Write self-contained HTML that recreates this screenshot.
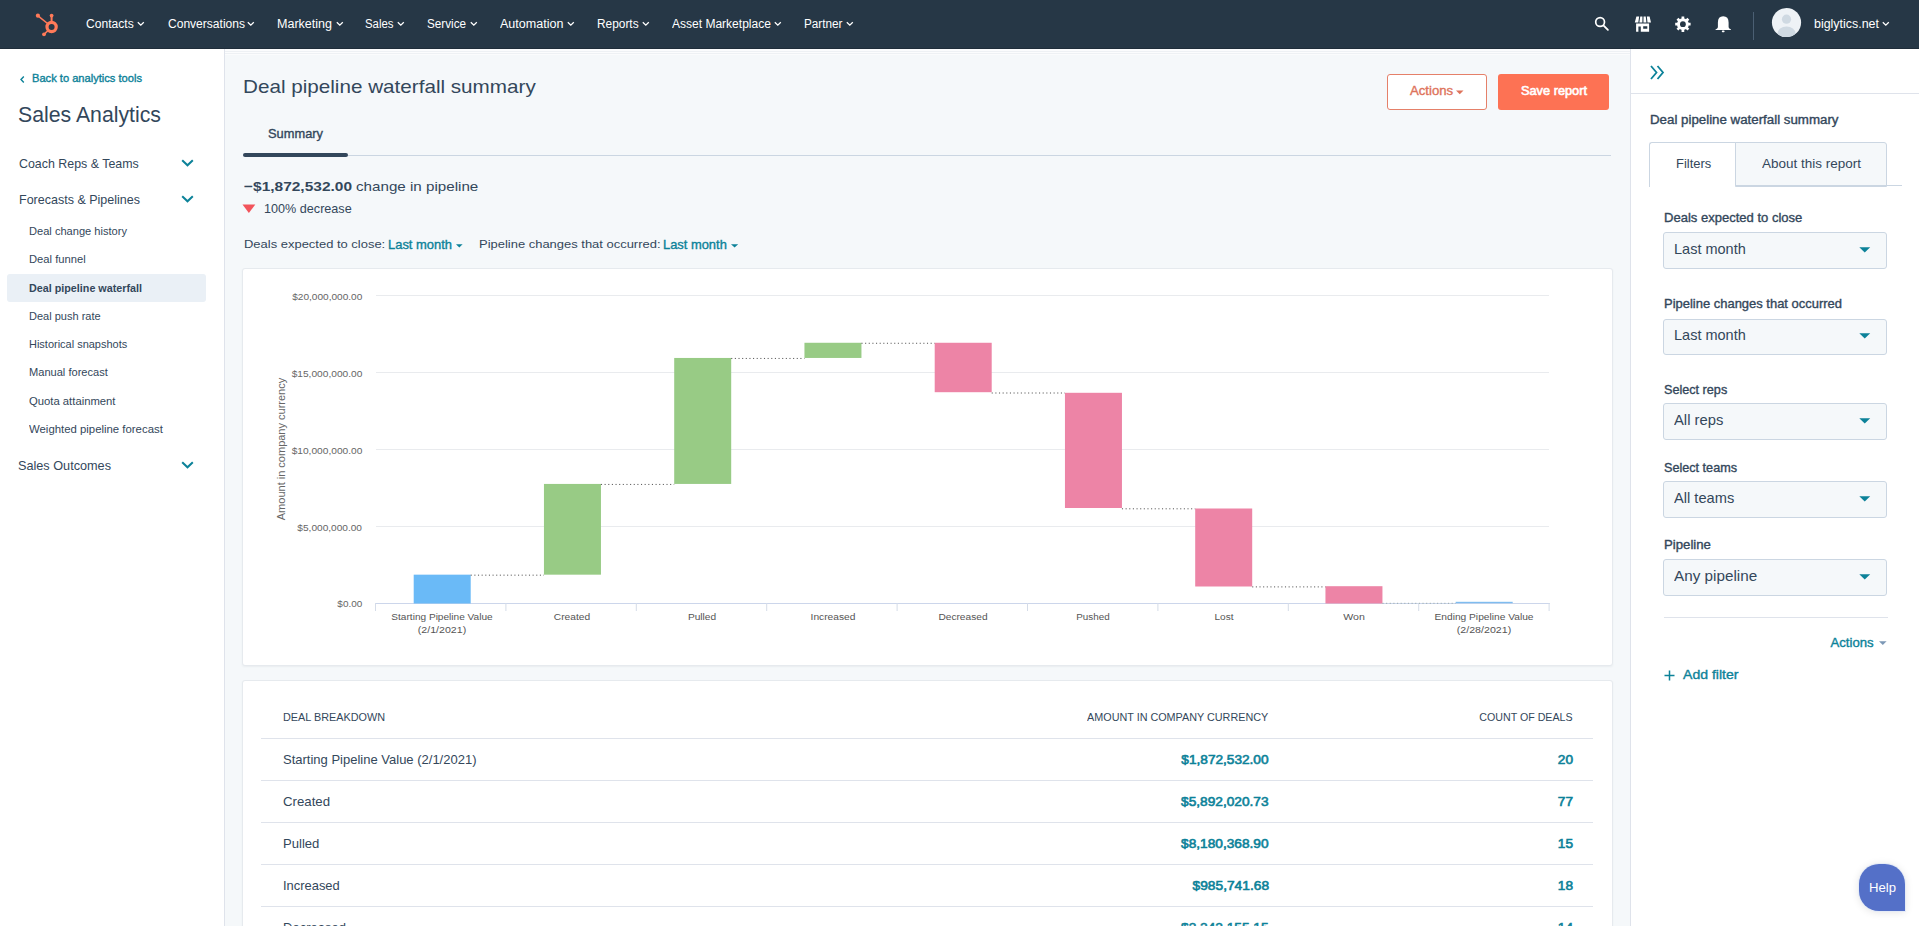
<!DOCTYPE html>
<html><head><meta charset="utf-8"><title>Deal pipeline waterfall summary</title>
<style>
html,body{margin:0;padding:0;width:1919px;height:926px;overflow:hidden;background:#f5f8fa;font-family:"Liberation Sans",sans-serif;}
.t{position:absolute;white-space:nowrap;line-height:1;}
</style></head><body>
<div style="position:absolute;left:0px;top:0px;width:1919px;height:49px;background:#263746"></div>
<div style="position:absolute;left:0px;top:48px;width:1919px;height:1px;background:#1f2d3a"></div>
<svg style="position:absolute;left:0;top:0" width="70" height="48" viewBox="0 0 70 48">
<g fill="#ff7a59" stroke="#ff7a59">
<circle cx="51.6" cy="27" r="4.6" fill="none" stroke-width="3.2"/>
<line x1="51.6" y1="16" x2="51.6" y2="22" stroke-width="2"/>
<circle cx="51.6" cy="15.6" r="1.9" stroke="none"/>
<line x1="38" y1="15.8" x2="48.2" y2="24" stroke-width="1.6"/>
<circle cx="37.9" cy="15.7" r="2.1" stroke="none"/>
<line x1="44" y1="34.3" x2="48.6" y2="30" stroke-width="1.6"/>
<circle cx="44" cy="34.3" r="1.9" stroke="none"/>
</g></svg>
<div class="t" style="top:18.44px;font-size:12px;color:#ffffff;left:86.30px;transform:scaleX(1.0072);transform-origin:left;">Contacts</div>
<svg style="position:absolute;left:137.0px;top:21px" width="8" height="6" viewBox="0 0 8 6"><path d="M0.8 1.2 L3.8 4.2 L6.8 1.2" fill="none" stroke="#fff" stroke-width="1.3"/></svg>
<div class="t" style="top:18.44px;font-size:12px;color:#ffffff;left:167.50px;transform:scaleX(1.0037);transform-origin:left;">Conversations</div>
<svg style="position:absolute;left:246.7px;top:21px" width="8" height="6" viewBox="0 0 8 6"><path d="M0.8 1.2 L3.8 4.2 L6.8 1.2" fill="none" stroke="#fff" stroke-width="1.3"/></svg>
<div class="t" style="top:18.44px;font-size:12px;color:#ffffff;left:277.00px;transform:scaleX(1.0439);transform-origin:left;">Marketing</div>
<svg style="position:absolute;left:335.8px;top:21px" width="8" height="6" viewBox="0 0 8 6"><path d="M0.8 1.2 L3.8 4.2 L6.8 1.2" fill="none" stroke="#fff" stroke-width="1.3"/></svg>
<div class="t" style="top:18.44px;font-size:12px;color:#ffffff;left:365.00px;transform:scaleX(0.9490);transform-origin:left;">Sales</div>
<svg style="position:absolute;left:396.7px;top:21px" width="8" height="6" viewBox="0 0 8 6"><path d="M0.8 1.2 L3.8 4.2 L6.8 1.2" fill="none" stroke="#fff" stroke-width="1.3"/></svg>
<div class="t" style="top:18.44px;font-size:12px;color:#ffffff;left:427.00px;transform:scaleX(0.9746);transform-origin:left;">Service</div>
<svg style="position:absolute;left:469.6px;top:21px" width="8" height="6" viewBox="0 0 8 6"><path d="M0.8 1.2 L3.8 4.2 L6.8 1.2" fill="none" stroke="#fff" stroke-width="1.3"/></svg>
<div class="t" style="top:18.44px;font-size:12px;color:#ffffff;left:499.80px;transform:scaleX(1.0461);transform-origin:left;">Automation</div>
<svg style="position:absolute;left:567.0px;top:21px" width="8" height="6" viewBox="0 0 8 6"><path d="M0.8 1.2 L3.8 4.2 L6.8 1.2" fill="none" stroke="#fff" stroke-width="1.3"/></svg>
<div class="t" style="top:18.44px;font-size:12px;color:#ffffff;left:596.70px;transform:scaleX(0.9897);transform-origin:left;">Reports</div>
<svg style="position:absolute;left:642.0px;top:21px" width="8" height="6" viewBox="0 0 8 6"><path d="M0.8 1.2 L3.8 4.2 L6.8 1.2" fill="none" stroke="#fff" stroke-width="1.3"/></svg>
<div class="t" style="top:18.44px;font-size:12px;color:#ffffff;left:671.70px;transform:scaleX(1.0018);transform-origin:left;">Asset Marketplace</div>
<svg style="position:absolute;left:773.7px;top:21px" width="8" height="6" viewBox="0 0 8 6"><path d="M0.8 1.2 L3.8 4.2 L6.8 1.2" fill="none" stroke="#fff" stroke-width="1.3"/></svg>
<div class="t" style="top:18.44px;font-size:12px;color:#ffffff;left:804.00px;transform:scaleX(0.9782);transform-origin:left;">Partner</div>
<svg style="position:absolute;left:845.6px;top:21px" width="8" height="6" viewBox="0 0 8 6"><path d="M0.8 1.2 L3.8 4.2 L6.8 1.2" fill="none" stroke="#fff" stroke-width="1.3"/></svg>
<svg style="position:absolute;left:1590px;top:12px" width="24" height="24" viewBox="1590 12 24 24">
<circle cx="1600.1" cy="22" r="4.4" fill="none" stroke="#fff" stroke-width="1.7"/>
<line x1="1603.4" y1="25.3" x2="1607.9" y2="29.8" stroke="#fff" stroke-width="1.8" stroke-linecap="round"/>
</svg>
<svg style="position:absolute;left:1633px;top:14px" width="22" height="20" viewBox="1633 14 22 20">
<path d="M1636.40 16.4 L1639.15 16.4 L1638.30 22.6 L1634.80 22.6 Z M1640.25 16.4 L1642.45 16.4 L1642.35 22.6 L1639.40 22.6 Z M1643.55 16.4 L1645.75 16.4 L1646.40 22.6 L1643.45 22.6 Z M1646.85 16.4 L1649.60 16.4 L1651.00 22.6 L1647.50 22.6 Z" fill="#fff"/>
<path fill="#fff" fill-rule="evenodd" d="M1636.1 23.6 H1649.1 V31.7 H1636.1 Z M1638.4 26.5 H1640.8 V31.7 H1638.4 Z M1643.2 26.3 H1647.3 V28.7 H1643.2 Z"/>
</svg>
<svg style="position:absolute;left:1673px;top:14px" width="20" height="20" viewBox="1673 14 20 20">
<path d="M1687.80 22.85 L1690.60 22.85 L1690.60 25.55 L1687.80 25.55 Z M1687.32 26.71 L1689.30 28.69 L1687.39 30.60 L1685.41 28.62 Z M1684.25 29.10 L1684.25 31.90 L1681.55 31.90 L1681.55 29.10 Z M1680.39 28.62 L1678.41 30.60 L1676.50 28.69 L1678.48 26.71 Z M1678.00 25.55 L1675.20 25.55 L1675.20 22.85 L1678.00 22.85 Z M1678.48 21.69 L1676.50 19.71 L1678.41 17.80 L1680.39 19.78 Z M1681.55 19.30 L1681.55 16.50 L1684.25 16.50 L1684.25 19.30 Z M1685.41 19.78 L1687.39 17.80 L1689.30 19.71 L1687.32 21.69 Z " fill="#fff"/><circle cx="1682.9" cy="24.2" r="5.9" fill="#fff"/><circle cx="1682.9" cy="24.2" r="2.9" fill="#263746"/>
</svg>
<svg style="position:absolute;left:1713px;top:14px" width="20" height="20" viewBox="1713 14 20 20">
<path fill="#fff" d="M1723.2 16.3 Q1728.6 16.3 1728.6 22.5 V27.2 Q1728.8 28.4 1731 29.4 V30 H1715.5 V29.4 Q1717.7 28.4 1717.9 27.2 V22.5 Q1717.9 16.3 1723.2 16.3 Z"/>
<rect x="1721.8" y="30.6" width="2.8" height="1.6" rx="0.8" fill="#fff"/>
</svg>
<div style="position:absolute;left:1753px;top:12px;width:1px;height:28px;background:#4b5f73"></div>
<svg style="position:absolute;left:1771px;top:7px" width="31" height="31" viewBox="0 0 31 31">
<circle cx="15.5" cy="15.5" r="14.6" fill="#eef2f6"/>
<clipPath id="av"><circle cx="15.5" cy="15.5" r="14.6"/></clipPath>
<g clip-path="url(#av)" fill="#cfd9e2"><circle cx="15.5" cy="12.2" r="4.6"/><ellipse cx="15.5" cy="26.5" rx="9" ry="7"/></g>
</svg>
<div class="t" style="top:17.84px;font-size:12px;color:#ffffff;left:1813.90px;transform:scaleX(1.0366);transform-origin:left;">biglytics.net</div>
<svg style="position:absolute;left:1882px;top:21px" width="8" height="6" viewBox="0 0 8 6"><path d="M0.8 1.2 L3.8 4.2 L6.8 1.2" fill="none" stroke="#fff" stroke-width="1.3"/></svg>
<div style="position:absolute;left:0px;top:49px;width:224px;height:877px;background:#fff"></div>
<div style="position:absolute;left:224px;top:49px;width:1px;height:877px;background:#dfe3eb"></div>
<svg style="position:absolute;left:19px;top:75px" width="7" height="9" viewBox="0 0 7 9"><path d="M4.8 1.5 L2 4.5 L4.8 7.5" fill="none" stroke="#0c8299" stroke-width="1.4"/></svg>
<div class="t" style="top:72.69px;font-size:11px;color:#0c8299;-webkit-text-stroke:0.35px currentColor;left:31.90px;transform:scaleX(1.0106);transform-origin:left;">Back to analytics tools</div>
<div class="t" style="top:104.25px;font-size:21.2px;color:#33475b;left:17.90px;transform:scaleX(1.0035);transform-origin:left;">Sales Analytics</div>
<div class="t" style="top:157.53px;font-size:12.6px;color:#33475b;left:18.60px;transform:scaleX(0.9854);transform-origin:left;">Coach Reps &amp; Teams</div>
<svg style="position:absolute;left:181px;top:159px" width="13" height="8" viewBox="0 0 13 8"><path d="M1.2 1.2 L6.5 6.3 L11.8 1.2" fill="none" stroke="#0c8299" stroke-width="2"/></svg>
<div class="t" style="top:193.53px;font-size:12.6px;color:#33475b;left:18.60px;transform:scaleX(0.9935);transform-origin:left;">Forecasts &amp; Pipelines</div>
<svg style="position:absolute;left:181px;top:195px" width="13" height="8" viewBox="0 0 13 8"><path d="M1.2 1.2 L6.5 6.3 L11.8 1.2" fill="none" stroke="#0c8299" stroke-width="2"/></svg>
<div style="position:absolute;left:7px;top:274px;width:198.5px;height:27.5px;background:#eaf0f6;border-radius:3px"></div>
<div class="t" style="top:225.99px;font-size:11px;color:#33475b;left:29.10px;transform:scaleX(1.0079);transform-origin:left;">Deal change history</div>
<div class="t" style="top:254.27px;font-size:11px;color:#33475b;left:29.10px;transform:scaleX(1.0188);transform-origin:left;">Deal funnel</div>
<div class="t" style="top:282.55px;font-size:11px;color:#33475b;font-weight:700;left:29.10px;transform:scaleX(0.9780);transform-origin:left;">Deal pipeline waterfall</div>
<div class="t" style="top:310.83px;font-size:11px;color:#33475b;left:29.10px;transform:scaleX(1.0007);transform-origin:left;">Deal push rate</div>
<div class="t" style="top:339.11px;font-size:11px;color:#33475b;left:29.10px;transform:scaleX(0.9976);transform-origin:left;">Historical snapshots</div>
<div class="t" style="top:367.39px;font-size:11px;color:#33475b;left:29.10px;transform:scaleX(1.0068);transform-origin:left;">Manual forecast</div>
<div class="t" style="top:395.67px;font-size:11px;color:#33475b;left:29.10px;transform:scaleX(1.0250);transform-origin:left;">Quota attainment</div>
<div class="t" style="top:423.95px;font-size:11px;color:#33475b;left:29.10px;transform:scaleX(1.0337);transform-origin:left;">Weighted pipeline forecast</div>
<div class="t" style="top:459.93px;font-size:12.6px;color:#33475b;left:18.10px;transform:scaleX(1.0064);transform-origin:left;">Sales Outcomes</div>
<svg style="position:absolute;left:181px;top:461px" width="13" height="8" viewBox="0 0 13 8"><path d="M1.2 1.2 L6.5 6.3 L11.8 1.2" fill="none" stroke="#0c8299" stroke-width="2"/></svg>
<div style="position:absolute;left:225px;top:49px;width:1405px;height:877px;background:#f5f8fa"></div>
<div style="position:absolute;left:225px;top:49px;width:1405px;height:6px;background:#fbfcfd"></div>
<div style="position:absolute;left:225px;top:51px;width:1405px;height:1px;background:#eef1f4"></div>
<div style="position:absolute;left:225px;top:53px;width:1405px;height:1px;background:#eef1f4"></div>
<div class="t" style="top:76.52px;font-size:19px;color:#33475b;left:243.30px;transform:scaleX(1.0870);transform-origin:left;">Deal pipeline waterfall summary</div>
<div style="position:absolute;left:1387px;top:74px;width:98px;height:34px;border:1px solid #e58069;background:#fff;border-radius:3px"></div>
<div class="t" style="top:86.03px;font-size:11.9px;color:#de735b;-webkit-text-stroke:0.35px currentColor;left:1410.00px;transform:scaleX(1.1077);transform-origin:left;">Actions</div>
<svg style="position:absolute;left:1456px;top:90px" width="8" height="5" viewBox="0 0 8 5"><path d="M0 0.5 H7.5 L3.75 4.3 Z" fill="#de735b"/></svg>
<div style="position:absolute;left:1498px;top:74px;width:111px;height:36px;background:#fd7254;border-radius:3px"></div>
<div class="t" style="top:86.03px;font-size:11.9px;color:#fff;-webkit-text-stroke:0.6px currentColor;left:1520.60px;transform:scaleX(1.0737);transform-origin:left;">Save report</div>
<div class="t" style="top:127.73px;font-size:12.6px;color:#33475b;-webkit-text-stroke:0.35px currentColor;left:268.30px;transform:scaleX(1.0206);transform-origin:left;">Summary</div>
<div style="position:absolute;left:243px;top:155px;width:1368px;height:1px;background:#cbd6e2"></div>
<div style="position:absolute;left:243px;top:153px;width:105px;height:3.5px;background:#33475b;border-radius:2px"></div>
<div class="t" style="top:179.69px;font-size:13.6px;color:#33475b;font-weight:700;left:243.80px;transform:scaleX(1.1383);transform-origin:left;">&minus;$1,872,532.00</div>
<div class="t" style="top:179.69px;font-size:13.6px;color:#33475b;left:355.60px;transform:scaleX(1.1159);transform-origin:left;">change in pipeline</div>
<svg style="position:absolute;left:242px;top:204px" width="14" height="10" viewBox="0 0 14 10"><path d="M0.5 0.5 H13.3 L6.9 9 Z" fill="#f2545b"/></svg>
<div class="t" style="top:203.27px;font-size:12.2px;color:#33475b;left:263.50px;transform:scaleX(1.0354);transform-origin:left;">100% decrease</div>
<div class="t" style="top:239.31px;font-size:11.8px;color:#33475b;left:243.80px;transform:scaleX(1.0986);transform-origin:left;">Deals expected to close:</div>
<div class="t" style="top:238.97px;font-size:12.2px;color:#0c8299;-webkit-text-stroke:0.35px currentColor;left:388.00px;transform:scaleX(1.0614);transform-origin:left;">Last month</div>
<svg style="position:absolute;left:456px;top:244px" width="8" height="5" viewBox="0 0 8 5"><path d="M0 0.3 H6.6 L3.3 3.5 Z" fill="#0c8299"/></svg>
<div class="t" style="top:239.31px;font-size:11.8px;color:#33475b;left:478.50px;transform:scaleX(1.0982);transform-origin:left;">Pipeline changes that occurred:</div>
<div class="t" style="top:238.97px;font-size:12.2px;color:#0c8299;-webkit-text-stroke:0.35px currentColor;left:663.40px;transform:scaleX(1.0581);transform-origin:left;">Last month</div>
<svg style="position:absolute;left:731px;top:244px" width="8" height="5" viewBox="0 0 8 5"><path d="M0 0.3 H7.2 L3.6 3.5 Z" fill="#0c8299"/></svg>
<div style="position:absolute;left:242px;top:268px;width:1369px;height:396px;background:#fff;border:1px solid #e6eaee;border-radius:3px;box-shadow:0 1px 2px rgba(45,62,80,0.06)"></div>
<svg style="position:absolute;left:0;top:0" width="1919" height="926" viewBox="0 0 1919 926"><rect x="376" y="295" width="1173" height="1" fill="#e9ebee"/><rect x="376" y="372" width="1173" height="1" fill="#e9ebee"/><rect x="376" y="449" width="1173" height="1" fill="#e9ebee"/><rect x="376" y="526" width="1173" height="1" fill="#e9ebee"/><rect x="375" y="603" width="1175" height="1" fill="#ccd6eb"/><rect x="375.0" y="603" width="1" height="8" fill="#d5dce8"/><rect x="505.4" y="603" width="1" height="8" fill="#d5dce8"/><rect x="635.8" y="603" width="1" height="8" fill="#d5dce8"/><rect x="766.2" y="603" width="1" height="8" fill="#d5dce8"/><rect x="896.6" y="603" width="1" height="8" fill="#d5dce8"/><rect x="1027.0" y="603" width="1" height="8" fill="#d5dce8"/><rect x="1157.4" y="603" width="1" height="8" fill="#d5dce8"/><rect x="1287.8" y="603" width="1" height="8" fill="#d5dce8"/><rect x="1418.2" y="603" width="1" height="8" fill="#d5dce8"/><rect x="1548.6" y="603" width="1" height="8" fill="#d5dce8"/><rect x="413.70" y="574.66" width="57" height="28.84" fill="#6abaf7"/><rect x="543.95" y="483.93" width="57" height="90.74" fill="#98cb85"/><rect x="674.20" y="357.95" width="57" height="125.98" fill="#98cb85"/><rect x="804.45" y="342.77" width="57" height="15.18" fill="#98cb85"/><rect x="934.70" y="342.77" width="57" height="49.43" fill="#ed84a6"/><rect x="1064.95" y="392.80" width="57" height="115.20" fill="#ed84a6"/><rect x="1195.20" y="508.50" width="57" height="78.00" fill="#ed84a6"/><rect x="1325.45" y="586.20" width="57" height="17.30" fill="#ed84a6"/><rect x="1455.70" y="601.8" width="57" height="1.4" fill="#7fbcef"/><line x1="470.70" y1="575.16" x2="543.95" y2="575.16" stroke="#555" stroke-width="1" stroke-dasharray="1.1 2.54"/><line x1="600.95" y1="484.43" x2="674.20" y2="484.43" stroke="#555" stroke-width="1" stroke-dasharray="1.1 2.54"/><line x1="731.20" y1="358.45" x2="804.45" y2="358.45" stroke="#555" stroke-width="1" stroke-dasharray="1.1 2.54"/><line x1="861.45" y1="343.27" x2="934.70" y2="343.27" stroke="#555" stroke-width="1" stroke-dasharray="1.1 2.54"/><line x1="991.70" y1="393.00" x2="1064.95" y2="393.00" stroke="#555" stroke-width="1" stroke-dasharray="1.1 2.54"/><line x1="1121.95" y1="508.80" x2="1195.20" y2="508.80" stroke="#555" stroke-width="1" stroke-dasharray="1.1 2.54"/><line x1="1252.20" y1="586.90" x2="1325.45" y2="586.90" stroke="#555" stroke-width="1" stroke-dasharray="1.1 2.54"/><line x1="1382.45" y1="603.30" x2="1455.70" y2="603.30" stroke="#9aa" stroke-width="1" stroke-dasharray="1.1 2.54"/></svg>
<div class="t" style="top:292.49px;font-size:9.7px;color:#666666;right:1556.60px;transform:scaleX(1.0409);transform-origin:right;">$20,000,000.00</div>
<div class="t" style="top:369.19px;font-size:9.7px;color:#666666;right:1556.60px;transform:scaleX(1.0498);transform-origin:right;">$15,000,000.00</div>
<div class="t" style="top:445.89px;font-size:9.7px;color:#666666;right:1556.60px;transform:scaleX(1.0498);transform-origin:right;">$10,000,000.00</div>
<div class="t" style="top:522.69px;font-size:9.7px;color:#666666;right:1556.60px;transform:scaleX(1.0427);transform-origin:right;">$5,000,000.00</div>
<div class="t" style="top:599.19px;font-size:9.7px;color:#666666;right:1556.60px;transform:scaleX(1.0268);transform-origin:right;">$0.00</div>
<div class="t" style="left:281px;top:449px;font-size:11px;color:#666;transform:translate(-50%,-50%) rotate(-90deg);transform-origin:center;">Amount in company currency</div>
<div class="t" style="top:612.09px;font-size:9.7px;color:#555555;left:141.50px;width:600px;text-align:center;transform:scaleX(1.0411);transform-origin:center;">Starting Pipeline Value</div>
<div class="t" style="top:625.19px;font-size:9.7px;color:#555555;left:141.50px;width:600px;text-align:center;transform:scaleX(1.0957);transform-origin:center;">(2/1/2021)</div>
<div class="t" style="top:612.09px;font-size:9.7px;color:#555555;left:271.85px;width:600px;text-align:center;transform:scaleX(1.0531);transform-origin:center;">Created</div>
<div class="t" style="top:612.09px;font-size:9.7px;color:#555555;left:402.20px;width:600px;text-align:center;transform:scaleX(1.0469);transform-origin:center;">Pulled</div>
<div class="t" style="top:612.09px;font-size:9.7px;color:#555555;left:532.55px;width:600px;text-align:center;transform:scaleX(1.0530);transform-origin:center;">Increased</div>
<div class="t" style="top:612.09px;font-size:9.7px;color:#555555;left:662.90px;width:600px;text-align:center;transform:scaleX(1.0499);transform-origin:center;">Decreased</div>
<div class="t" style="top:612.09px;font-size:9.7px;color:#555555;left:793.25px;width:600px;text-align:center;transform:scaleX(1.0165);transform-origin:center;">Pushed</div>
<div class="t" style="top:612.09px;font-size:9.7px;color:#555555;left:923.60px;width:600px;text-align:center;transform:scaleX(1.0375);transform-origin:center;">Lost</div>
<div class="t" style="top:612.09px;font-size:9.7px;color:#555555;left:1053.95px;width:600px;text-align:center;transform:scaleX(1.0937);transform-origin:center;">Won</div>
<div class="t" style="top:612.09px;font-size:9.7px;color:#555555;left:1184.30px;width:600px;text-align:center;transform:scaleX(1.0523);transform-origin:center;">Ending Pipeline Value</div>
<div class="t" style="top:625.19px;font-size:9.7px;color:#555555;left:1184.30px;width:600px;text-align:center;transform:scaleX(1.0976);transform-origin:center;">(2/28/2021)</div>
<div style="position:absolute;left:242px;top:680px;width:1369px;height:300px;background:#fff;border:1px solid #e6eaee;border-radius:3px;box-shadow:0 1px 2px rgba(45,62,80,0.06)"></div>
<div class="t" style="top:712.16px;font-size:10.8px;color:#33475b;left:282.50px;transform:scaleX(1.0040);transform-origin:left;">DEAL BREAKDOWN</div>
<div class="t" style="top:711.86px;font-size:10.8px;color:#33475b;right:650.40px;transform:scaleX(0.9996);transform-origin:right;">AMOUNT IN COMPANY CURRENCY</div>
<div class="t" style="top:711.86px;font-size:10.8px;color:#33475b;right:346.40px;transform:scaleX(0.9863);transform-origin:right;">COUNT OF DEALS</div>
<div style="position:absolute;left:261px;top:738px;width:1332px;height:1px;background:#dfe3eb"></div>
<div class="t" style="top:753.20px;font-size:13px;color:#33475b;left:282.50px;transform:scaleX(1.0002);transform-origin:left;">Starting Pipeline Value (2/1/2021)</div>
<div class="t" style="top:753.53px;font-size:12.6px;color:#0c8299;-webkit-text-stroke:0.6px currentColor;right:650.40px;transform:scaleX(1.0826);transform-origin:right;">$1,872,532.00</div>
<div class="t" style="top:753.53px;font-size:12.6px;color:#0c8299;-webkit-text-stroke:0.6px currentColor;right:346.40px;transform:scaleX(1.0845);transform-origin:right;">20</div>
<div style="position:absolute;left:261px;top:780px;width:1332px;height:1px;background:#dfe3eb"></div>
<div class="t" style="top:795.20px;font-size:13px;color:#33475b;left:282.50px;transform:scaleX(1.0162);transform-origin:left;">Created</div>
<div class="t" style="top:795.53px;font-size:12.6px;color:#0c8299;-webkit-text-stroke:0.6px currentColor;right:650.40px;transform:scaleX(1.0863);transform-origin:right;">$5,892,020.73</div>
<div class="t" style="top:795.53px;font-size:12.6px;color:#0c8299;-webkit-text-stroke:0.6px currentColor;right:346.40px;transform:scaleX(1.0845);transform-origin:right;">77</div>
<div style="position:absolute;left:261px;top:822px;width:1332px;height:1px;background:#dfe3eb"></div>
<div class="t" style="top:837.20px;font-size:13px;color:#33475b;left:282.50px;transform:scaleX(1.0072);transform-origin:left;">Pulled</div>
<div class="t" style="top:837.53px;font-size:12.6px;color:#0c8299;-webkit-text-stroke:0.6px currentColor;right:650.40px;transform:scaleX(1.0863);transform-origin:right;">$8,180,368.90</div>
<div class="t" style="top:837.53px;font-size:12.6px;color:#0c8299;-webkit-text-stroke:0.6px currentColor;right:346.40px;transform:scaleX(1.0845);transform-origin:right;">15</div>
<div style="position:absolute;left:261px;top:864px;width:1332px;height:1px;background:#dfe3eb"></div>
<div class="t" style="top:879.20px;font-size:13px;color:#33475b;left:282.50px;transform:scaleX(0.9931);transform-origin:left;">Increased</div>
<div class="t" style="top:879.53px;font-size:12.6px;color:#0c8299;-webkit-text-stroke:0.6px currentColor;right:650.40px;transform:scaleX(1.0921);transform-origin:right;">$985,741.68</div>
<div class="t" style="top:879.53px;font-size:12.6px;color:#0c8299;-webkit-text-stroke:0.6px currentColor;right:346.40px;transform:scaleX(1.0845);transform-origin:right;">18</div>
<div style="position:absolute;left:261px;top:906px;width:1332px;height:1px;background:#dfe3eb"></div>
<div class="t" style="top:921.20px;font-size:13px;color:#33475b;left:282.50px;transform:scaleX(1.0020);transform-origin:left;">Decreased</div>
<div class="t" style="top:921.53px;font-size:12.6px;color:#0c8299;-webkit-text-stroke:0.6px currentColor;right:650.40px;transform:scaleX(1.0863);transform-origin:right;">$3,242,155.15</div>
<div class="t" style="top:921.53px;font-size:12.6px;color:#0c8299;-webkit-text-stroke:0.6px currentColor;right:346.40px;transform:scaleX(1.0845);transform-origin:right;">14</div>
<div style="position:absolute;left:1630px;top:49px;width:289px;height:877px;background:#fff"></div>
<div style="position:absolute;left:1630px;top:49px;width:1px;height:877px;background:#dfe3eb"></div>
<svg style="position:absolute;left:1649px;top:64px" width="18" height="17" viewBox="0 0 18 17"><path d="M2 2 L7.5 8.5 L2 15 M8.5 2 L14 8.5 L8.5 15" fill="none" stroke="#0c8299" stroke-width="1.8"/></svg>
<div style="position:absolute;left:1631px;top:93px;width:288px;height:1px;background:#dfe3eb"></div>
<div class="t" style="top:113.84px;font-size:12px;color:#33475b;-webkit-text-stroke:0.35px currentColor;left:1649.60px;transform:scaleX(1.1083);transform-origin:left;">Deal pipeline waterfall summary</div>
<div style="position:absolute;left:1649px;top:141.5px;width:86px;height:44px;background:#fff;border:1px solid #cbd6e2;border-bottom:none;border-right:none;border-radius:3px 0 0 0"></div>
<div style="position:absolute;left:1735px;top:141.5px;width:150px;height:43px;background:#f5f8fa;border:1px solid #cbd6e2;border-radius:0 3px 0 0"></div>
<div style="position:absolute;left:1735px;top:185px;width:167px;height:1px;background:#cbd6e2"></div>
<div class="t" style="top:157.62px;font-size:12.5px;color:#33475b;left:1675.60px;transform:scaleX(1.0343);transform-origin:left;">Filters</div>
<div class="t" style="top:157.62px;font-size:12.5px;color:#33475b;left:1761.80px;transform:scaleX(1.0783);transform-origin:left;">About this report</div>
<div class="t" style="top:212.10px;font-size:12.4px;color:#33475b;-webkit-text-stroke:0.35px currentColor;left:1663.80px;transform:scaleX(1.0512);transform-origin:left;">Deals expected to close</div>
<div style="position:absolute;left:1663px;top:232px;width:222px;height:35px;background:#f5f8fa;border:1px solid #cbd6e2;border-radius:3px"></div>
<div class="t" style="top:241.64px;font-size:14.6px;color:#33475b;left:1674.20px;transform:scaleX(0.9944);transform-origin:left;">Last month</div>
<svg style="position:absolute;left:1859px;top:246.5px" width="12" height="6" viewBox="0 0 12 6"><path d="M0.3 0.2 H11.2 L5.75 5.6 Z" fill="#0c8299"/></svg>
<div class="t" style="top:297.70px;font-size:12.4px;color:#33475b;-webkit-text-stroke:0.35px currentColor;left:1663.80px;transform:scaleX(1.0462);transform-origin:left;">Pipeline changes that occurred</div>
<div style="position:absolute;left:1663px;top:318.5px;width:222px;height:34px;background:#f5f8fa;border:1px solid #cbd6e2;border-radius:3px"></div>
<div class="t" style="top:328.14px;font-size:14.6px;color:#33475b;left:1674.20px;transform:scaleX(0.9944);transform-origin:left;">Last month</div>
<svg style="position:absolute;left:1859px;top:333.0px" width="12" height="6" viewBox="0 0 12 6"><path d="M0.3 0.2 H11.2 L5.75 5.6 Z" fill="#0c8299"/></svg>
<div class="t" style="top:383.80px;font-size:12.4px;color:#33475b;-webkit-text-stroke:0.35px currentColor;left:1663.80px;transform:scaleX(1.0196);transform-origin:left;">Select reps</div>
<div style="position:absolute;left:1663px;top:403px;width:222px;height:35px;background:#f5f8fa;border:1px solid #cbd6e2;border-radius:3px"></div>
<div class="t" style="top:412.64px;font-size:14.6px;color:#33475b;left:1674.20px;transform:scaleX(1.0129);transform-origin:left;">All reps</div>
<svg style="position:absolute;left:1859px;top:417.5px" width="12" height="6" viewBox="0 0 12 6"><path d="M0.3 0.2 H11.2 L5.75 5.6 Z" fill="#0c8299"/></svg>
<div class="t" style="top:461.50px;font-size:12.4px;color:#33475b;-webkit-text-stroke:0.35px currentColor;left:1663.80px;transform:scaleX(1.0192);transform-origin:left;">Select teams</div>
<div style="position:absolute;left:1663px;top:481px;width:222px;height:35px;background:#f5f8fa;border:1px solid #cbd6e2;border-radius:3px"></div>
<div class="t" style="top:490.64px;font-size:14.6px;color:#33475b;left:1674.20px;transform:scaleX(1.0031);transform-origin:left;">All teams</div>
<svg style="position:absolute;left:1859px;top:495.5px" width="12" height="6" viewBox="0 0 12 6"><path d="M0.3 0.2 H11.2 L5.75 5.6 Z" fill="#0c8299"/></svg>
<div class="t" style="top:539.40px;font-size:12.4px;color:#33475b;-webkit-text-stroke:0.35px currentColor;left:1663.80px;transform:scaleX(1.0636);transform-origin:left;">Pipeline</div>
<div style="position:absolute;left:1663px;top:559px;width:222px;height:35px;background:#f5f8fa;border:1px solid #cbd6e2;border-radius:3px"></div>
<div class="t" style="top:568.64px;font-size:14.6px;color:#33475b;left:1674.20px;transform:scaleX(1.0463);transform-origin:left;">Any pipeline</div>
<svg style="position:absolute;left:1859px;top:573.5px" width="12" height="6" viewBox="0 0 12 6"><path d="M0.3 0.2 H11.2 L5.75 5.6 Z" fill="#0c8299"/></svg>
<div style="position:absolute;left:1663.8px;top:617px;width:224px;height:1px;background:#dfe3eb"></div>
<div class="t" style="top:636.70px;font-size:12.4px;color:#0c8299;-webkit-text-stroke:0.35px currentColor;right:45.40px;transform:scaleX(1.0630);transform-origin:right;">Actions</div>
<svg style="position:absolute;left:1879px;top:640.5px" width="8" height="5" viewBox="0 0 8 5"><path d="M0 0.3 H7.6 L3.8 3.9 Z" fill="#7c98b6"/></svg>
<svg style="position:absolute;left:1664px;top:669.5px" width="11" height="11" viewBox="0 0 11 11"><path d="M5.5 0.5 V10.5 M0.5 5.5 H10.5" stroke="#0c8299" stroke-width="1.5"/></svg>
<div class="t" style="top:668.63px;font-size:12.6px;color:#0c8299;-webkit-text-stroke:0.35px currentColor;left:1682.70px;transform:scaleX(1.1166);transform-origin:left;">Add filter</div>
<div style="position:absolute;left:1859px;top:864px;width:46px;height:47px;background:#5470c8;border-radius:20px 20px 0 20px;box-shadow:0 0 0 1px #e6ecf7,0 1px 8px rgba(0,0,0,0.12)"></div>
<div class="t" style="top:882.07px;font-size:12.2px;color:#fff;left:1868.70px;transform:scaleX(1.0766);transform-origin:left;">Help</div>
</body></html>
